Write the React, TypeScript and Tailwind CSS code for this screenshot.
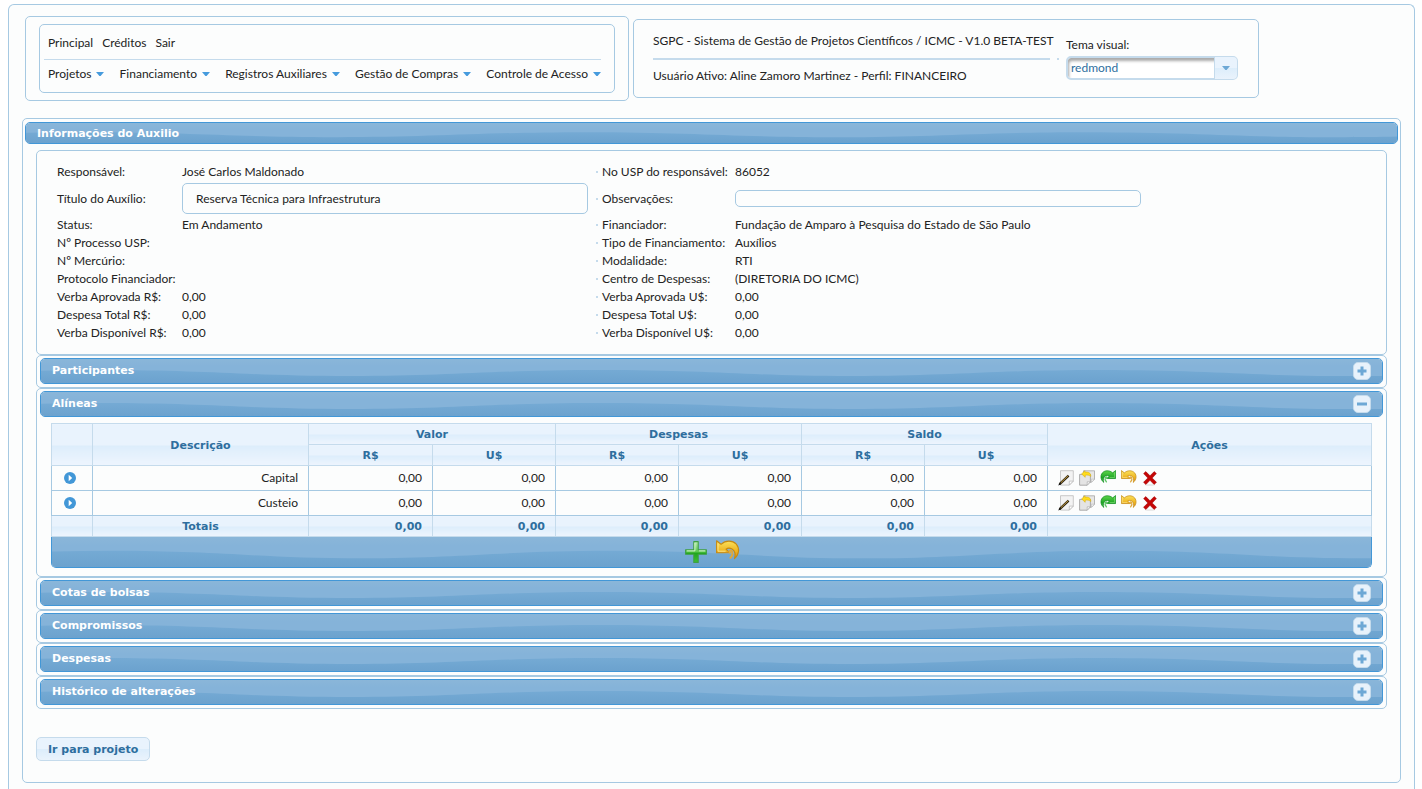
import { useId, useState } from "react";
import type { ReactNode } from "react";

function Wave() {
  const id = useId();
  return (
    <svg className="pointer-events-none absolute inset-0 h-full w-full" aria-hidden="true">
      <defs>
        <linearGradient id={`${id}-top`} x1="0" y1="0" x2="0" y2="1">
          <stop offset="0" stopColor="#8ab6d9" />
          <stop offset="0.3" stopColor="#85b3d9" />
          <stop offset="1" stopColor="#85b3d9" />
        </linearGradient>
        <linearGradient id={`${id}-low`} x1="0" y1="0" x2="0" y2="1">
          <stop offset="0" stopColor="#75aad4" />
          <stop offset="0.5" stopColor="#70a6d1" />
          <stop offset="1" stopColor="#6ca2ce" />
        </linearGradient>
      </defs>
      <rect width="100%" height="100%" fill={`url(#${id}-top)`} />
      <svg width="3060" height="100%" viewBox="0 0 3060 26" preserveAspectRatio="none">
        <path
          fill={`url(#${id}-low)`}
          d="M0 12.600C20 12.100 40 12 60 12C170 12 210 18.500 310 18.500S450 12 560 12S710 18.500 810 18.500S950 12 1060 12S1210 18.500 1310 18.500S1450 12 1560 12S1710 18.500 1810 18.500S1950 12 2060 12S2210 18.500 2310 18.500S2450 12 2560 12S2710 18.500 2810 18.500S2950 12 3060 12V26H0Z"
        />
      </svg>
    </svg>
  );
}

function Caret({ className }: { className: string }) {
  return (
    <svg className={className} width="8" height="4" viewBox="0 0 8 4" fill="currentColor" aria-hidden="true">
      <path d="M0 0h8L4.6 4H3.4Z" />
    </svg>
  );
}

function Bar({ title, open, onToggle }: { title: string; open: boolean; onToggle: () => void }) {
  return (
    <h2 className="relative flex h-[26px] items-center justify-between overflow-hidden rounded-[5px] border border-[#4297d7] px-[11px] font-['DejaVu_Sans',sans-serif] text-[11px] font-bold text-white">
      <Wave />
      <span className="relative">{title}</span>
      <button
        type="button"
        aria-expanded={open}
        aria-label={title}
        onClick={onToggle}
        className="relative flex size-[18px] items-center justify-center rounded-[5px] border border-[#c5dbec] bg-[#e8f2fb] text-[#6da8d5]"
      >
        <svg width="10" height="10" viewBox="0 0 10 10" fill="currentColor" aria-hidden="true">
          <path d={open ? "M0 3.500h10v3H0z" : "M3.500 0.500h3v3h3v3h-3v3h-3v-3h-3v-3h3z"} />
        </svg>
      </button>
    </h2>
  );
}

function Panel({ title, initial = false, children }: { title: string; initial?: boolean; children?: ReactNode }) {
  const [open, setOpen] = useState(initial);
  return (
    <section className="rounded-[5px] border border-[#a6c9e2] px-[3px] pt-0.5 pb-[3px]">
      <Bar title={title} open={open} onToggle={() => setOpen(!open)} />
      {open && children}
    </section>
  );
}

const UNDO =
  "M0.6 0.8L5 4.3C9.5 0.2 16.5 0 20.3 4.2C24 8.6 23 15 18.4 18.6C19.6 14.8 19.2 11 16 9C13.6 7.7 11.6 8 10 9.2L14 12.8H0.6Z";

function Curl({ kind, size }: { kind: "gold" | "green"; size: number }) {
  const id = useId();
  const gold = kind === "gold";
  return (
    <svg width={size} height={size} viewBox="0 0 24 24" aria-hidden="true">
      <defs>
        <linearGradient id={id} x1="0" y1="0" x2="0" y2="1">
          <stop offset="0" stopColor={gold ? "#fbe25c" : "#5fd64c"} />
          <stop offset="0.6" stopColor={gold ? "#edb21f" : "#1fa626"} />
          <stop offset="1" stopColor={gold ? "#d98a1c" : "#57c35a"} />
        </linearGradient>
      </defs>
      <g transform={gold ? undefined : "matrix(-1 0 0 1 24 0)"}>
        <path d={UNDO} fill={`url(#${id})`} stroke={gold ? "#c68a12" : "#0b8a1b"} strokeWidth="1.1" strokeLinejoin="round" />
        <path d="M13.800 12.600C12.400 10.600 15 9.800 16 11.600C17 13.600 16 16 14.400 17.800" fill="none" stroke={gold ? "#e0a83a" : "#5cc463"} strokeWidth="2" strokeLinecap="round" />
        <path d="M2 3.400V11.200H9.600" fill="none" stroke={gold ? "#fff0a0" : "#9ff08c"} strokeWidth="0.8" />
      </g>
    </svg>
  );
}

function Plus() {
  const id = useId();
  return (
    <svg width="24" height="24" viewBox="0 0 24 24" aria-hidden="true">
      <defs>
        <linearGradient id={id} x1="0" y1="0" x2="0" y2="1">
          <stop offset="0" stopColor="#b9ecb0" />
          <stop offset="0.5" stopColor="#5cc94f" />
          <stop offset="0.55" stopColor="#1fa51c" />
          <stop offset="1" stopColor="#3cc232" />
        </linearGradient>
      </defs>
      <path d="M9.800 1.600h4.400v8.200h8.200v4.400h-8.200v8.200H9.800v-8.200H1.600V9.800h8.200z" fill={`url(#${id})`} stroke="#3f9f45" strokeWidth="1.1" strokeLinejoin="round" />
      <path d="M10.900 2.800v8.100H2.800M15 10.900h6.200" fill="none" stroke="#dff8da" strokeWidth="0.9" />
    </svg>
  );
}

function Edit() {
  return (
    <svg width="16" height="16" viewBox="0 0 16 16" aria-hidden="true">
      <path d="M2.500 0.700h12.800v10.400l-4 4H2.500z" fill="#f3f3f3" stroke="#bdbdbd" strokeWidth="0.8" />
      <path d="M11.300 15.100v-4h4z" fill="#fff" stroke="#b5b5b5" strokeWidth="0.7" />
      <path d="M1.600 14.200L10.600 5.600" stroke="#2d2410" strokeWidth="2.300" />
      <path d="M3 12.600L10 5.900" stroke="#c29a3c" strokeWidth="1" />
      <path d="M0.300 15.400l1-2.400 1.500 1.400z" fill="#111" />
    </svg>
  );
}

function Copy() {
  return (
    <svg width="16" height="16" viewBox="0 0 16 16" aria-hidden="true">
      <path d="M4.500 0.800h11v8.400l-3 3h-8z" fill="#e6e6e6" stroke="#a4a4a4" strokeWidth="0.8" />
      <path d="M0.600 4.400h10.800v7.400l-3.200 3.400H0.600z" fill="#e4e4e4" stroke="#999" strokeWidth="0.8" />
      <path d="M8.200 15.200v-3.400h3.200z" fill="#fff" stroke="#ababab" strokeWidth="0.7" />
      <path d="M12.400 12.200v-3h3z" fill="#fff" stroke="#b4b4b4" strokeWidth="0.6" />
      <path d="M2.600 3.900L6 0.700v1.500c3.600-.4 5.800.6 5.800 4.200C10.200 5 8 4.900 6.200 5.300v2z" fill="#ffdc1a" stroke="#d9ae10" strokeWidth="0.6" />
    </svg>
  );
}

function Cross() {
  return (
    <svg width="16" height="16" viewBox="0 0 16 16" aria-hidden="true">
      <ellipse cx="8" cy="15" rx="5" ry="0.8" fill="#e2e2e2" />
      <path d="M3.800 1.600L8 5.800l4.200-4.200 2.200 2L10.200 8l4.300 4.300-2.400 2.200L8 10.300l-4.100 4.200-2.400-2.200L5.800 8 1.600 3.600z" fill="#c50606" stroke="#9b0000" strokeWidth="0.5" />
    </svg>
  );
}

const money = ["Valor", "Despesas", "Saldo"];
const glass =
  "border border-[#c5dbec] bg-linear-to-b from-[#e9f3fd] from-50% via-[#dcedfb] via-50% to-[#eef5fe] pt-0.5 font-['DejaVu_Sans',sans-serif] text-[11px] font-bold text-[#2e6e9e]";
const cell = "border border-[#a6c9e2] pr-2.5 text-right";

function IconButton({ label, children }: { label: string; children: ReactNode }) {
  return (
    <button type="button" aria-label={label} className="block">
      {children}
    </button>
  );
}

function Budget() {
  return (
    <div className="px-[11px] pt-1.5 pb-[5px]">
      <table className="w-full table-fixed border-collapse">
        <colgroup>
          <col className="w-[41px]" />
          <col className="w-[216px]" />
          <col className="w-[124px]" />
          <col className="w-[123px]" />
          <col className="w-[123px]" />
          <col className="w-[123px]" />
          <col className="w-[123px]" />
          <col className="w-[123px]" />
          <col />
        </colgroup>
        <thead>
          <tr className="h-[21px]">
            <th rowSpan={2} className={glass} />
            <th rowSpan={2} className={glass}>Descrição</th>
            {money.map((m) => (
              <th key={m} colSpan={2} className={glass}>{m}</th>
            ))}
            <th rowSpan={2} className={glass}>Ações</th>
          </tr>
          <tr className="h-[21px]">
            {money.flatMap((m) => [
              <th key={`${m}-r`} className={glass}>R$</th>,
              <th key={`${m}-u`} className={glass}>U$</th>,
            ])}
          </tr>
        </thead>
        <tbody>
          {["Capital", "Custeio"].map((name) => (
            <tr key={name} className="h-[25px] bg-[#fcfdfd]">
              <td className="border border-[#a6c9e2]">
                <button type="button" aria-label={`Detalhar ${name}`} className="ml-3 block">
                  <svg width="12" height="12" viewBox="0 0 12 12" aria-hidden="true">
                    <circle cx="6" cy="6" r="6" fill="#4297d7" />
                    <path d="M4.700 2.800L8.200 6 4.700 9.200z" fill="#fff" />
                  </svg>
                </button>
              </td>
              <td className={cell}>{name}</td>
              {money.flatMap((m) => [
                <td key={`${m}-r`} className={cell}>0,00</td>,
                <td key={`${m}-u`} className={cell}>0,00</td>,
              ])}
              <td className="border border-[#a6c9e2] pl-2.5">
                <div className="flex gap-[5px]">
                  <IconButton label="Editar"><Edit /></IconButton>
                  <IconButton label="Copiar"><Copy /></IconButton>
                  <IconButton label="Refazer"><Curl kind="green" size={16} /></IconButton>
                  <IconButton label="Desfazer"><Curl kind="gold" size={16} /></IconButton>
                  <IconButton label="Excluir"><Cross /></IconButton>
                </div>
              </td>
            </tr>
          ))}
        </tbody>
        <tfoot>
          <tr className="h-[21px]">
            <td className={glass} />
            <td className={`${glass} text-center`}>Totais</td>
            {money.flatMap((m) => [
              <td key={`${m}-r`} className={`${glass} pr-2.5 text-right`}>0,00</td>,
              <td key={`${m}-u`} className={`${glass} pr-2.5 text-right`}>0,00</td>,
            ])}
            <td className={glass} />
          </tr>
        </tfoot>
      </table>
      <div className="relative flex h-[31px] justify-center gap-2 overflow-hidden rounded-b-[5px] border border-t-0 border-[#4297d7] pt-[3px]">
        <Wave />
        <button type="button" aria-label="Adicionar" className="relative self-start"><Plus /></button>
        <button type="button" aria-label="Desfazer" className="relative self-start"><Curl kind="gold" size={24} /></button>
      </div>
    </div>
  );
}

const details = [
  ["Responsável:", "José Carlos Maldonado", "No USP do responsável:", "86052"],
  ["Título do Auxílio:", "Reserva Técnica para Infraestrutura", "Observações:", ""],
  ["Status:", "Em Andamento", "Financiador:", "Fundação de Amparo à Pesquisa do Estado de São Paulo"],
  ["Nº Processo USP:", "", "Tipo de Financiamento:", "Auxílios"],
  ["Nº Mercúrio:", "", "Modalidade:", "RTI"],
  ["Protocolo Financiador:", "", "Centro de Despesas:", "(DIRETORIA DO ICMC)"],
  ["Verba Aprovada R$:", "0,00", "Verba Aprovada U$:", "0,00"],
  ["Despesa Total R$:", "0,00", "Despesa Total U$:", "0,00"],
  ["Verba Disponível R$:", "0,00", "Verba Disponível U$:", "0,00"],
];

function Details() {
  return (
    <section className="rounded-[5px] border border-[#a6c9e2] px-5 py-3">
      {details.map(([l1, v1, l2, v2], i) => (
        <div
          key={l1}
          className={`grid grid-cols-[125px_414px_6px_133px_406px] items-center whitespace-nowrap ${i === 1 ? "h-[35px]" : "h-[18px]"}`}
        >
          {i === 1 ? <label htmlFor="titulo">{l1}</label> : <span>{l1}</span>}
          {i === 1 ? (
            <input id="titulo" readOnly defaultValue={v1} className="mr-2 h-[31px] rounded-[5px] border border-[#a6c9e2] px-[13px] outline-none" />
          ) : (
            <span>{v1}</span>
          )}
          <span className="size-0.5 bg-[#c5dbec]" />
          {i === 1 ? <label htmlFor="obs">{l2}</label> : <span>{l2}</span>}
          {i === 1 ? (
            <input id="obs" readOnly defaultValue={v2} className="h-[17px] rounded-[5px] border border-[#a6c9e2] px-3 outline-none" />
          ) : (
            <span>{v2}</span>
          )}
        </div>
      ))}
    </section>
  );
}

const menus = ["Projetos", "Financiamento", "Registros Auxiliares", "Gestão de Compras", "Controle de Acesso"];

export default function App() {
  return (
    <div className="flex min-h-screen flex-col bg-white pt-1 pr-[7px] pl-2 font-[Lato,sans-serif] text-xs leading-4 text-[#222]">
      <div className="flex-1 rounded-t-[6px] border border-b-0 border-[#a6c9e2] bg-[#fcfdfd] px-[13px]">
        <header className="flex items-center gap-1 pt-[11px] pb-[17px] pl-[3px]">
          <div className="rounded-[5px] border border-[#a6c9e2] px-[13px] py-[7px]">
            <nav className="h-[69px] w-[576px] rounded-[5px] border border-[#a6c9e2] pr-[13px] pl-1">
              <div className="flex h-[35px] items-center gap-[9px] border-b border-[#c5dbec] px-1 pt-0.5">
                <a href="#principal">Principal</a>
                <a href="#creditos">Créditos</a>
                <a href="#sair">Sair</a>
              </div>
              <div className="flex items-center justify-between pt-1.5 pl-1">
                {menus.map((m) => (
                  <button key={m} type="button" className="flex items-center gap-[5px] whitespace-nowrap">
                    {m}
                    <Caret className="text-[#469bdd]" />
                  </button>
                ))}
              </div>
            </nav>
          </div>
          <div className="flex h-[79px] rounded-[5px] border border-[#a6c9e2] pr-5 pl-[19px]">
            <div className="w-[397px] whitespace-nowrap">
              <p className="mt-[13px]">SGPC - Sistema de Gestão de Projetos Científicos / ICMC - V1.0 BETA-TEST</p>
              <div className="mt-[9px] h-0.5 bg-[#c5dbec]" />
              <p className="mt-2">Usuário Ativo: Aline Zamoro Martinez - Perfil: FINANCEIRO</p>
            </div>
            <span className="mx-[7px] size-0.5 self-center bg-[#c5dbec]" />
            <div className="w-[172px] pt-[17px]">
              <label htmlFor="tema" className="block">Tema visual:</label>
              <div className="relative mt-[3px]">
                <select
                  id="tema"
                  defaultValue="redmond"
                  className="block h-6 w-full appearance-none rounded-[5px] border-2 border-[#c5dbec] bg-white pl-[3px] text-[#2e6e9e] shadow-[inset_1px_3px_3px_#aaa] outline-none"
                >
                  <option>redmond</option>
                </select>
                <span className="pointer-events-none absolute inset-y-px right-px flex w-[23px] items-center justify-center rounded-r-[4px] border-l border-[#c5dbec] bg-linear-to-b from-[#e9f3fd] from-50% via-[#dcedfb] via-50% to-[#eaf3fc]">
                  <Caret className="text-[#6da8d5]" />
                </span>
              </div>
            </div>
          </div>
        </header>

        <main className="rounded-[5px] border border-[#a6c9e2] px-0.5 pt-[3px] pb-[21px]">
          <h1 className="relative flex h-[22px] items-center overflow-hidden rounded-[5px] border border-[#4297d7] px-[11px] pt-0.5 font-['DejaVu_Sans',sans-serif] text-[11px] font-bold text-white">
            <Wave />
            <span className="relative">Informações do Auxilio</span>
          </h1>
          <div className="px-[11px] pt-1.5">
            <Details />
            <Panel title="Participantes" />
            <Panel title="Alíneas" initial>
              <Budget />
            </Panel>
            <Panel title="Cotas de bolsas" />
            <Panel title="Compromissos" />
            <Panel title="Despesas" />
            <Panel title="Histórico de alterações" />
            <button
              type="button"
              className="mt-7 flex h-6 items-center rounded-[5px] border border-[#c5dbec] bg-linear-to-b from-[#e9f3fd] from-50% via-[#dcedfb] via-50% to-[#eaf3fc] px-[11px] pt-0.5 font-['DejaVu_Sans',sans-serif] text-[11px] font-bold text-[#2e6e9e]"
            >
              Ir para projeto
            </button>
          </div>
        </main>
      </div>
    </div>
  );
}
